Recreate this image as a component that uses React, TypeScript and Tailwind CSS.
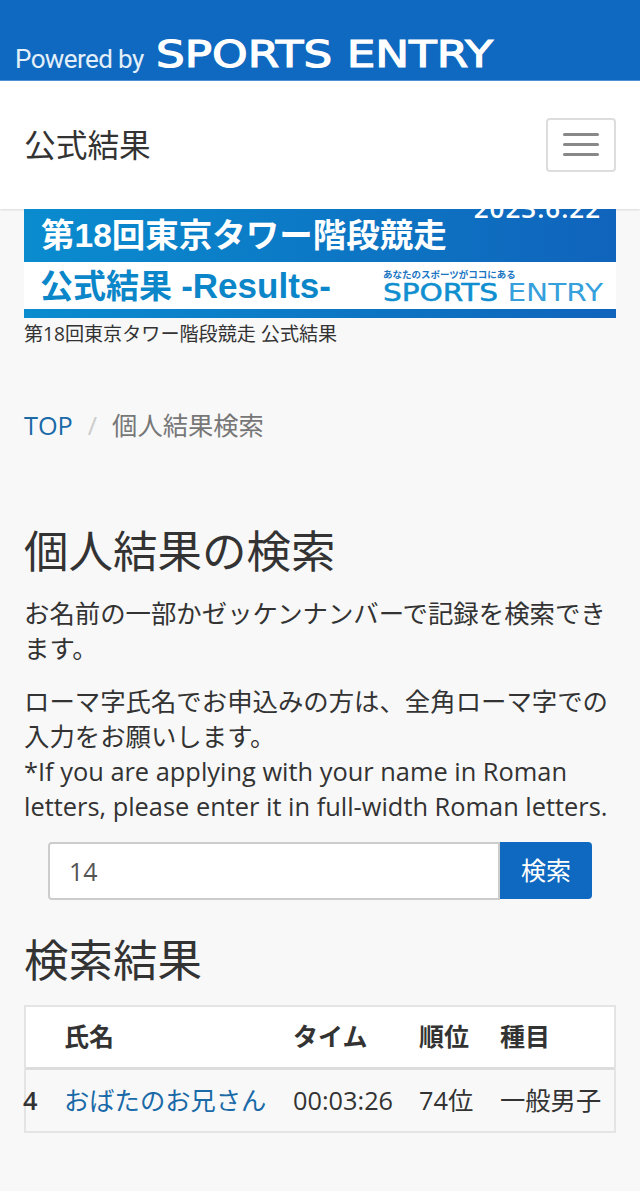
const FONT = "font-['Open_Sans','Noto_Sans_CJK_JP',sans-serif]";

function Wordmark({
  className,
  fill,
  weight,
  entryFill,
}: {
  className: string;
  fill: string;
  weight: number;
  entryFill?: string;
}) {
  return (
    <svg className={`${className} overflow-visible`} viewBox="0 0 340 30" preserveAspectRatio="none">
      <text
        x="0"
        y="28.6"
        textLength="340"
        lengthAdjust="spacingAndGlyphs"
        fontFamily="'DejaVu Sans', sans-serif"
        fontSize="38"
        fill={fill}
        stroke={fill}
        strokeWidth={weight}
      >
        SPORTS{" "}
        <tspan fill={entryFill ?? fill} stroke={entryFill ?? fill} strokeWidth={entryFill ? 0 : weight}>
          ENTRY
        </tspan>
      </text>
    </svg>
  );
}

export default function App() {
  return (
    <div className={`${FONT} min-h-[1191px] overflow-hidden bg-[#f8f8f8] text-[#333]`}>
      {/* Top bar */}
      <div className="flex h-[81px] items-end gap-[12px] border-b border-[#4d93d6] bg-[#1069c0] pb-[5px] pl-[15px]">
        <span className="font-['Roboto',sans-serif] text-[26px] leading-[32px] tracking-[-0.6px] text-[#e3eff9]">
          Powered by
        </span>
        <Wordmark className="mb-[7px] h-[30px] w-[337px]" fill="#ffffff" weight={1.2} />
      </div>

      {/* Navbar */}
      <div className="flex h-[128px] items-center justify-between bg-white px-6 shadow-[0_1px_2px_rgba(0,0,0,0.12)]">
        <span className="text-[31.7px] leading-none text-[#333]">公式結果</span>
        <button className="mb-[1px] flex h-[54px] w-[70px] flex-col items-center justify-center gap-[7px] rounded border-2 border-[#ddd] bg-white">
          <span className="h-[3px] w-[36px] rounded-sm bg-[#888]" />
          <span className="h-[3px] w-[36px] rounded-sm bg-[#888]" />
          <span className="h-[3px] w-[36px] rounded-sm bg-[#888]" />
        </button>
      </div>

      {/* Banner */}
      <div className="mx-6 flex h-[109px] flex-col">
        <div className="relative h-[53px] overflow-hidden bg-gradient-to-r from-[#0a8ccf] to-[#1064bb] pl-[17px]">
          <span className="font-['Liberation_Sans','Noto_Sans_CJK_JP',sans-serif] text-[33.5px] font-bold leading-[54px] text-white">
            第18回東京タワー階段競走
          </span>
          <span className="absolute right-[15px] top-[-14px] text-[26px] font-semibold leading-[26px] tracking-[1px] text-white">
            2023.6.22
          </span>
        </div>
        <div className="flex h-[47px] items-center justify-between bg-white pl-[16px] pr-[13px]">
          <span className="font-['Liberation_Sans','Noto_Sans_CJK_JP',sans-serif] text-[33px] font-bold leading-none text-[#0b86c9]">
            公式結果 <span className="text-[35px]">-Results-</span>
          </span>
          <div className="flex flex-col">
            <span className="text-[9.5px] font-semibold leading-[11px] text-[#1a75c4]">あなたのスポーツがココにある</span>
            <Wordmark className="mt-[2px] h-[20px] w-[220px]" fill="#0f8fd0" weight={0.8} entryFill="#35a0dc" />
          </div>
        </div>
        <div className="h-[9px] bg-gradient-to-r from-[#0a8ccf] to-[#1064bb]" />
      </div>

      {/* Caption */}
      <p className="mx-6 mt-[3px] text-[19.1px] leading-[26px] text-[#333]">第18回東京タワー階段競走 公式結果</p>

      {/* Breadcrumb */}
      <div className="mx-6 mt-[60px] flex text-[25.3px] leading-[36px]">
        <a className="text-[#1a6aa8]">TOP</a>
        <span className="px-[15px] text-[#ccc]">/</span>
        <span className="text-[#777]">個人結果検索</span>
      </div>

      <div className="mx-6">
        <h2 className="mt-[83px] text-[44.5px] font-normal leading-[50px]">個人結果の検索</h2>
        <p className="mt-[20px] text-[25.4px] leading-[35px]">お名前の一部かゼッケンナンバーで記録を検索できます。</p>
        <p className="mt-[18px] text-[25.4px] leading-[35px]">
          ローマ字氏名でお申込みの方は、全角ローマ字での入力をお願いします。
          <br />
          *If you are applying with your name in Roman letters, please enter it in full-width Roman letters.
        </p>

        {/* Search */}
        <div className="mx-6 mt-[18px] flex h-[58px]">
          <input
            readOnly
            value="14"
            className="h-full min-w-0 flex-1 rounded-l border-2 border-[#ccc] bg-white px-[19px] text-[25px] text-[#555] outline-none"
          />
          <button className="h-[57px] w-[92px] rounded-r bg-[#1069c0] text-[25px] text-white">検索</button>
        </div>

        <h2 className="mt-[35px] text-[44.5px] font-normal leading-[50px]">検索結果</h2>

        {/* Results table */}
        <div className="mt-[20px] border-2 border-[#e4e4e4]">
          <div className="flex h-[60px] items-center bg-white text-[25px] font-bold">
            <span className="w-[38px]" />
            <span className="w-[229px]">氏名</span>
            <span className="w-[126px]">タイム</span>
            <span className="w-[81px]">順位</span>
            <span>種目</span>
          </div>
          <div className="flex h-[64px] items-center border-t-[3px] border-[#ddd] text-[25.3px]">
            <span className="w-[38px] -indent-[3px] font-semibold">4</span>
            <a className="w-[229px] text-[#1a6aa8]">おばたのお兄さん</a>
            <span className="w-[126px]">00:03:26</span>
            <span className="w-[81px]">74位</span>
            <span>一般男子</span>
          </div>
        </div>
      </div>
    </div>
  );
}
